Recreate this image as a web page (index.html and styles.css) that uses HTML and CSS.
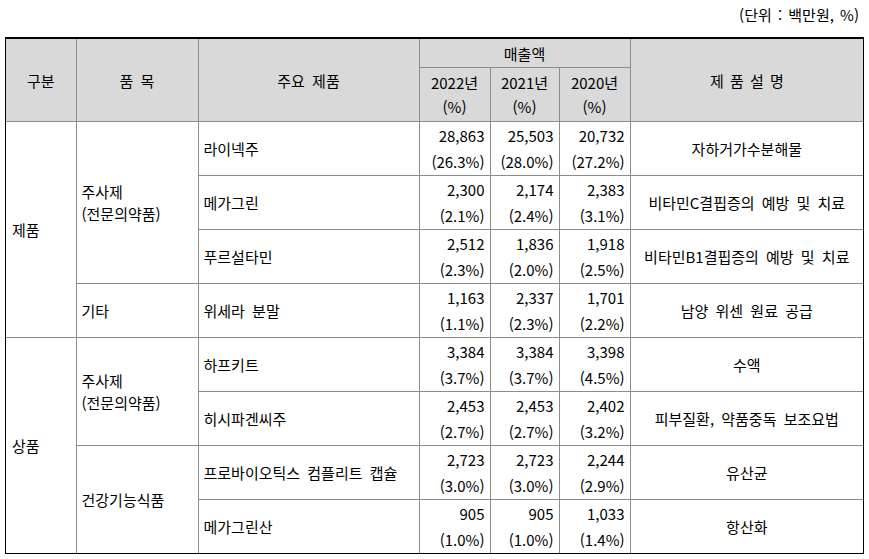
FILE: index.html
```html
<!DOCTYPE html>
<html lang="ko">
<head>
<meta charset="utf-8">
<link rel="stylesheet" href="styles.css">
</head>
<body>
<div class="page">
  <div class="unit">(단위 : 백만원, %)</div>
  <div class="frame">
    <table class="sales">
      <colgroup>
        <col class="c1"><col class="c2"><col class="c3"><col class="c4"><col class="c5"><col class="c6"><col class="c7">
      </colgroup>
      <thead>
        <tr class="h1">
          <th rowspan="2">구분</th>
          <th rowspan="2">품 목</th>
          <th rowspan="2">주요 제품</th>
          <th colspan="3">매출액</th>
          <th rowspan="2" class="wide">제 품 설 명</th>
        </tr>
        <tr class="h2">
          <th class="yr">2022년<br>(%)</th>
          <th class="yr">2021년<br>(%)</th>
          <th class="yr">2020년<br>(%)</th>
        </tr>
      </thead>
      <tbody>
        <tr>
          <td rowspan="4" class="cat">제품</td>
          <td rowspan="3" class="grp">주사제<br>(전문의약품)</td>
          <td class="prod">라이넥주</td>
          <td class="num">28,863<br>(26.3%)</td>
          <td class="num">25,503<br>(28.0%)</td>
          <td class="num">20,732<br>(27.2%)</td>
          <td class="desc">자하거가수분해물</td>
        </tr>
        <tr>
          <td class="prod">메가그린</td>
          <td class="num">2,300<br>(2.1%)</td>
          <td class="num">2,174<br>(2.4%)</td>
          <td class="num">2,383<br>(3.1%)</td>
          <td class="desc">비타민C결핍증의 예방 및 치료</td>
        </tr>
        <tr>
          <td class="prod">푸르설타민</td>
          <td class="num">2,512<br>(2.3%)</td>
          <td class="num">1,836<br>(2.0%)</td>
          <td class="num">1,918<br>(2.5%)</td>
          <td class="desc">비타민B1결핍증의 예방 및 치료</td>
        </tr>
        <tr>
          <td class="grp">기타</td>
          <td class="prod">위세라 분말</td>
          <td class="num">1,163<br>(1.1%)</td>
          <td class="num">2,337<br>(2.3%)</td>
          <td class="num">1,701<br>(2.2%)</td>
          <td class="desc">남양 위센 원료 공급</td>
        </tr>
        <tr>
          <td rowspan="4" class="cat">상품</td>
          <td rowspan="2" class="grp">주사제<br>(전문의약품)</td>
          <td class="prod">하프키트</td>
          <td class="num">3,384<br>(3.7%)</td>
          <td class="num">3,384<br>(3.7%)</td>
          <td class="num">3,398<br>(4.5%)</td>
          <td class="desc">수액</td>
        </tr>
        <tr>
          <td class="prod">히시파겐씨주</td>
          <td class="num">2,453<br>(2.7%)</td>
          <td class="num">2,453<br>(2.7%)</td>
          <td class="num">2,402<br>(3.2%)</td>
          <td class="desc">피부질환, 약품중독 보조요법</td>
        </tr>
        <tr>
          <td rowspan="2" class="grp">건강기능식품</td>
          <td class="prod">프로바이오틱스 컴플리트 캡슐</td>
          <td class="num">2,723<br>(3.0%)</td>
          <td class="num">2,723<br>(3.0%)</td>
          <td class="num">2,244<br>(2.9%)</td>
          <td class="desc">유산균</td>
        </tr>
        <tr>
          <td class="prod">메가그린산</td>
          <td class="num">905<br>(1.0%)</td>
          <td class="num">905<br>(1.0%)</td>
          <td class="num">1,033<br>(1.4%)</td>
          <td class="desc">항산화</td>
        </tr>
      </tbody>
    </table>
  </div>
</div>
</body>
</html>
```

FILE: styles.css
```css
html, body {
  margin: 0;
  padding: 0;
  background: #ffffff;
}

body {
  font-family: "Noto Sans CJK KR", "Noto Sans", sans-serif;
  font-size: 15px;
  color: #000;
}

.page {
  width: 869px;
  padding: 0 0 0 5px;
  box-sizing: border-box;
}

.unit {
  height: 37px;
  line-height: 30px;
  text-align: right;
  padding-right: 10px;
  word-spacing: 2px;
}

.frame {
  width: 859px;
  box-sizing: border-box;
  border: 1px solid #000;
  border-top: 2px solid #000;
}

.sales {
  width: 857px;
  border-collapse: collapse;
  border-style: hidden;
  table-layout: fixed;
  word-spacing: 3px;
}

.c1 { width: 70px; }
.c2 { width: 122px; }
.c3 { width: 221px; }
.c4 { width: 71px; }
.c5 { width: 69px; }
.c6 { width: 71px; }
.c7 { width: 233px; }

.sales th,
.sales td {
  border: 1px solid #8c8c8c;
  padding: 0;
  font-weight: normal;
  vertical-align: middle;
}

.sales th {
  background: #d9d9d9;
  text-align: center;
}

.h1 th { height: 28px; }
.h2 th { height: 53px; }

.sales th.yr {
  line-height: 24px;
}

.sales th.wide {
  word-spacing: 2px;
}

.sales tbody td {
  height: 53px;
}

.cat {
  padding-left: 6px !important;
  text-align: left;
}

.grp {
  padding-left: 5px !important;
  text-align: left;
  line-height: 22px;
}

.prod {
  padding-left: 5px !important;
  text-align: left;
}

.num {
  text-align: right;
  padding-right: 5px !important;
  line-height: 26px;
  word-spacing: 0;
}

.desc {
  text-align: center;
}
```
